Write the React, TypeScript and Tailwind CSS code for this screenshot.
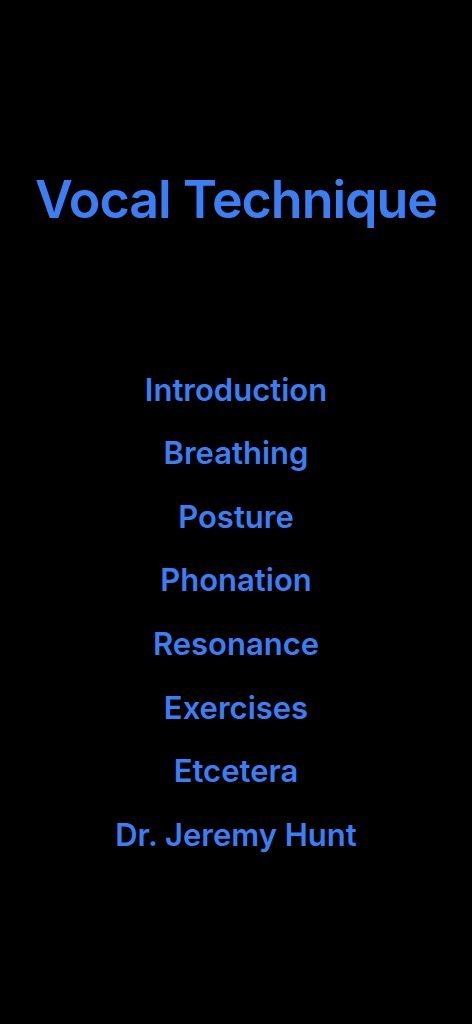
const items = [
  "Introduction",
  "Breathing",
  "Posture",
  "Phonation",
  "Resonance",
  "Exercises",
  "Etcetera",
  "Dr. Jeremy Hunt",
];

export default function App() {
  return (
    <div
      className="min-h-[1024px] w-full bg-black flex flex-col items-center pt-[168px]"
      style={{ fontFamily: "Inter, 'Noto Sans', sans-serif" }}
    >
      <h1 className="text-[52px] leading-[64px] font-semibold text-[#3a7ff6] tracking-[-0.02em]">
        Vocal Technique
      </h1>
      <nav className="mt-[126px] flex flex-col items-center">
        {items.map((item) => (
          <button
            key={item}
            className="h-[63.6px] text-[31px] font-semibold text-[#3a7ff6]"
          >
            {item}
          </button>
        ))}
      </nav>
    </div>
  );
}
